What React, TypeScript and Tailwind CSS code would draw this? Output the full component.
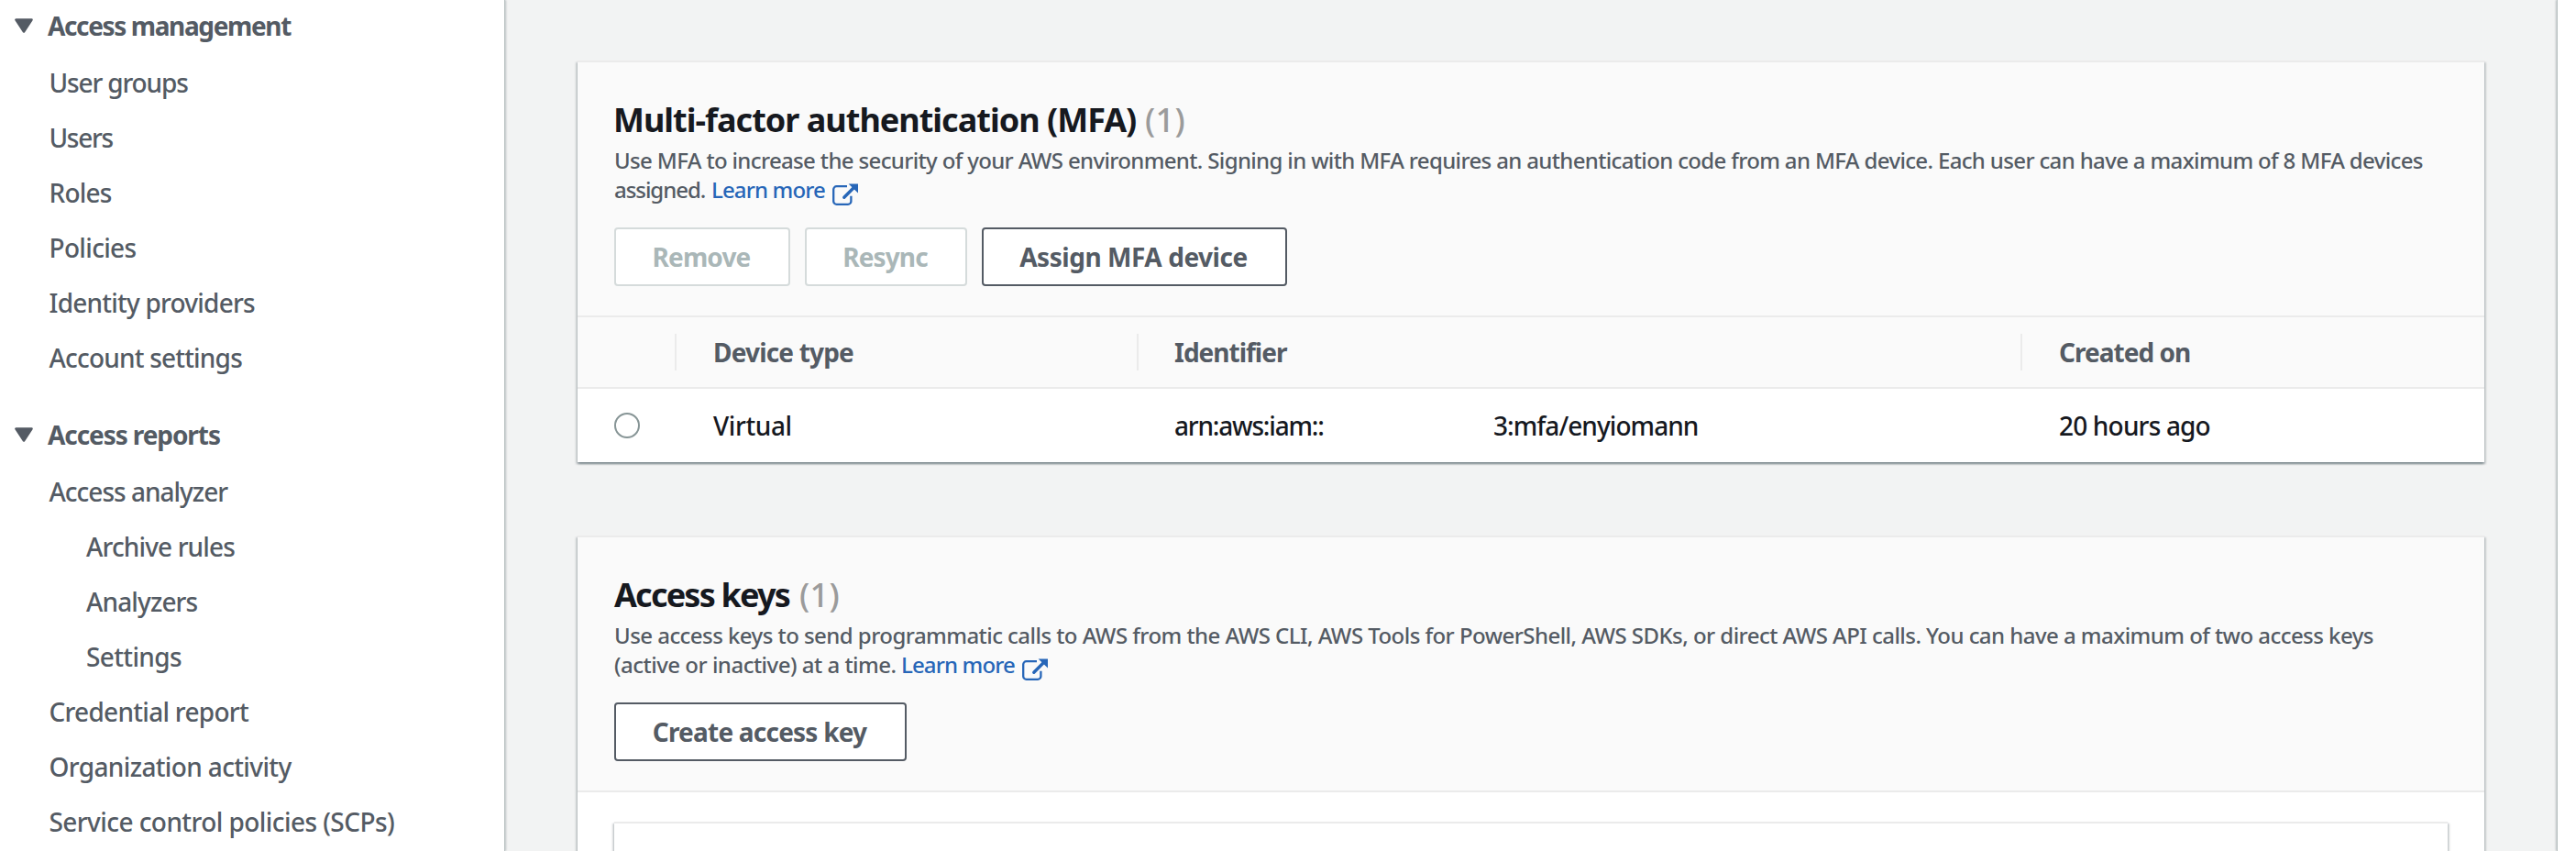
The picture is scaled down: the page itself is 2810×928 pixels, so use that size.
import type { ReactNode } from "react";

type NavEntry = { label: string; tracking: string; child?: boolean };

const managementLinks: NavEntry[] = [
  { label: "User groups", tracking: "tracking-[-1.15px]" },
  { label: "Users", tracking: "tracking-[-1.3px]" },
  { label: "Roles", tracking: "tracking-[-0.8px]" },
  { label: "Policies", tracking: "tracking-[-0.67px]" },
  { label: "Identity providers", tracking: "tracking-[-0.78px]" },
  { label: "Account settings", tracking: "tracking-[-0.8px]" },
];

const reportLinks: NavEntry[] = [
  { label: "Access analyzer", tracking: "tracking-[-1px]" },
  { label: "Archive rules", tracking: "tracking-[-0.87px]", child: true },
  { label: "Analyzers", tracking: "tracking-[-0.87px]", child: true },
  { label: "Settings", tracking: "tracking-[-0.63px]", child: true },
  { label: "Credential report", tracking: "tracking-[-0.72px]" },
  { label: "Organization activity", tracking: "tracking-[-0.64px]" },
  { label: "Service control policies (SCPs)", tracking: "tracking-[-0.57px]" },
];

function NavSection({
  title,
  tracking,
  links,
}: {
  title: string;
  tracking: string;
  links: NavEntry[];
}) {
  return (
    <section>
      <h3 className="flex h-[30px] items-center pl-4 font-bold">
        <svg width="20" height="16" viewBox="0 0 20 16" className="mt-[2px] mr-4 shrink-0">
          <path
            d="M1.5 1.5H18.5L10 14.5Z"
            fill="currentColor"
            stroke="currentColor"
            strokeWidth="2.6"
            strokeLinejoin="round"
          />
        </svg>
        <span className={`pt-px ${tracking}`}>{title}</span>
      </h3>
      <ul className="mt-[17px]">
        {links.map((link) => (
          <li
            key={link.label}
            className={`flex h-[60px] items-center pt-px ${link.child ? "pl-[94px]" : "pl-[53.5px]"} ${link.tracking}`}
          >
            <a>{link.label}</a>
          </li>
        ))}
      </ul>
    </section>
  );
}

function ExternalIcon() {
  return (
    <svg width="29" height="25" viewBox="0 0 29 25" className="mt-[9px]" fill="none" stroke="currentColor">
      <path
        d="M16 3.2H4.6A3.4 3.4 0 0 0 1.2 6.6V19.4A3.4 3.4 0 0 0 4.6 22.8H17A3.4 3.4 0 0 0 20.4 19.4V13.7"
        strokeWidth="2.3"
      />
      <path d="M12.8 15.2L24 4" strokeWidth="3.4" strokeLinecap="round" />
      <path d="M17.6 0.4H28V10.4Z" fill="currentColor" stroke="none" />
    </svg>
  );
}

function LearnMore() {
  return (
    <a className="flex text-[#2766b8]">
      <span className="w-[132px] tracking-[-0.87px]">Learn more</span>
      <ExternalIcon />
    </a>
  );
}

function Button({ children, className, disabled }: { children: ReactNode; className: string; disabled?: boolean }) {
  return (
    <button
      disabled={disabled}
      className={`flex h-16 items-center justify-center rounded-[4px] border-2 bg-white pr-[2px] pb-px text-[28px] font-bold ${
        disabled ? "border-[#d5dbdb] text-[#aab7b8]" : "border-[#545b64] text-[#545b64]"
      } ${className}`}
    >
      {children}
    </button>
  );
}

const cardShadow =
  "shadow-[0_2px_2px_0_rgba(0,28,36,0.3),2px_2px_2px_0_rgba(0,28,36,0.15),-2px_2px_2px_0_rgba(0,28,36,0.15)]";

export default function App() {
  return (
    <div className="flex h-[928px] w-[2810px] overflow-hidden bg-white font-['Noto_Sans',sans-serif] text-[28px] font-medium text-[#545b64]">
      <nav className="z-10 flex w-[550px] shrink-0 flex-col gap-[39px] bg-white pt-3 shadow-[1px_0_0_#b9c1c2,2px_0_2px_rgba(0,28,36,0.22)]">
        <NavSection title="Access management" tracking="tracking-[-1.37px]" links={managementLinks} />
        <NavSection title="Access reports" tracking="tracking-[-1.08px]" links={reportLinks} />
      </nav>

      <main className="flex flex-1 flex-col gap-20 bg-[#f2f3f3] px-20 pt-[66px]">
        <section className={`shrink-0 bg-white ${cardShadow}`}>
          <header className="border-y-2 border-[#ebebeb] bg-[#fafafa] px-10 pt-10 pb-8">
            <h2 className="-ml-px flex h-11 items-center pt-[2px] text-[36px] font-bold text-[#16191f]">
              <span className="w-[580px] tracking-[-0.99px] whitespace-nowrap">Multi-factor authentication (MFA)</span>
              <span className="font-medium tracking-[0.3px] text-[#9b9b9b]">(1)</span>
            </h2>
            <div className="mt-[7px] text-[24px] leading-8 whitespace-nowrap">
              <p className="tracking-[-0.65px]">
                Use MFA to increase the security of your AWS environment. Signing in with MFA requires an authentication
                code from an MFA device. Each user can have a maximum of 8 MFA devices
              </p>
              <div className="flex h-8">
                <span className="w-[106px] tracking-[-1.05px]">assigned.</span>
                <LearnMore />
              </div>
            </div>
            <div className="mt-[25px] flex gap-4">
              <Button disabled className="w-[192px] tracking-[-0.86px]">
                Remove
              </Button>
              <Button disabled className="w-[177px] tracking-[-0.87px]">
                Resync
              </Button>
              <Button className="w-[333px] tracking-[-0.45px]">Assign MFA device</Button>
            </div>
          </header>

          <div className="grid h-[78px] grid-cols-[108px_504px_964px_1fr] items-center border-b-2 border-[#ebebeb] bg-[#fafafa] font-bold">
            <div className="h-10 border-r-2 border-[#ebebeb]" />
            <div className="flex h-10 items-center border-r-2 border-[#ebebeb] pl-10 tracking-[-0.83px]">
              Device type
            </div>
            <div className="flex h-10 items-center border-r-2 border-[#ebebeb] pl-[39px] tracking-[-1px]">
              Identifier
            </div>
            <div className="flex h-10 items-center pl-10 tracking-[-0.97px]">Created on</div>
          </div>

          <div className="grid h-20 grid-cols-[108px_504px_964px_1fr] items-center text-[#16191f]">
            <div className="pl-10">
              <div className="size-7 rounded-full border-2 border-[#879596] bg-white" />
            </div>
            <div className="pb-px pl-10 tracking-[-0.4px]">Virtual</div>
            <div className="flex pb-px pl-[39px]">
              <span className="w-[349px] tracking-[-1.2px] whitespace-nowrap">arn:aws:iam::</span>
              <span className="-ml-px tracking-[-0.95px] whitespace-nowrap">3:mfa/enyiomann</span>
            </div>
            <div className="pb-px pl-10 tracking-[-0.82px]">20 hours ago</div>
          </div>
        </section>

        <section className={`shrink-0 bg-white ${cardShadow}`}>
          <header className="border-y-2 border-[#ebebeb] bg-[#fafafa] px-10 pt-10 pb-8">
            <h2 className="flex h-11 items-center pt-[2px] text-[36px] font-bold text-[#16191f]">
              <span className="w-[202px] tracking-[-1.8px] whitespace-nowrap">Access keys</span>
              <span className="font-medium tracking-[0.3px] text-[#9b9b9b]">(1)</span>
            </h2>
            <div className="mt-[7px] text-[24px] leading-8 whitespace-nowrap">
              <p className="tracking-[-0.548px]">
                Use access keys to send programmatic calls to AWS from the AWS CLI, AWS Tools for PowerShell, AWS SDKs,
                or direct AWS API calls. You can have a maximum of two access keys
              </p>
              <div className="flex h-8">
                <span className="w-[313px] tracking-[-0.5px]">(active or inactive) at a time.</span>
                <LearnMore />
              </div>
            </div>
            <div className="mt-[25px] flex">
              <Button className="w-[319px] tracking-[-0.78px]">Create access key</Button>
            </div>
          </header>
          <div className="px-10 pt-8">
            <div className={`h-[120px] border-t-2 border-[#ebebeb] bg-white ${cardShadow}`} />
          </div>
        </section>
      </main>

      <aside className="z-10 w-5 shrink-0 bg-white shadow-[-1px_0_0_#b9c1c2,-2px_0_2px_rgba(0,28,36,0.22)]" />
    </div>
  );
}
